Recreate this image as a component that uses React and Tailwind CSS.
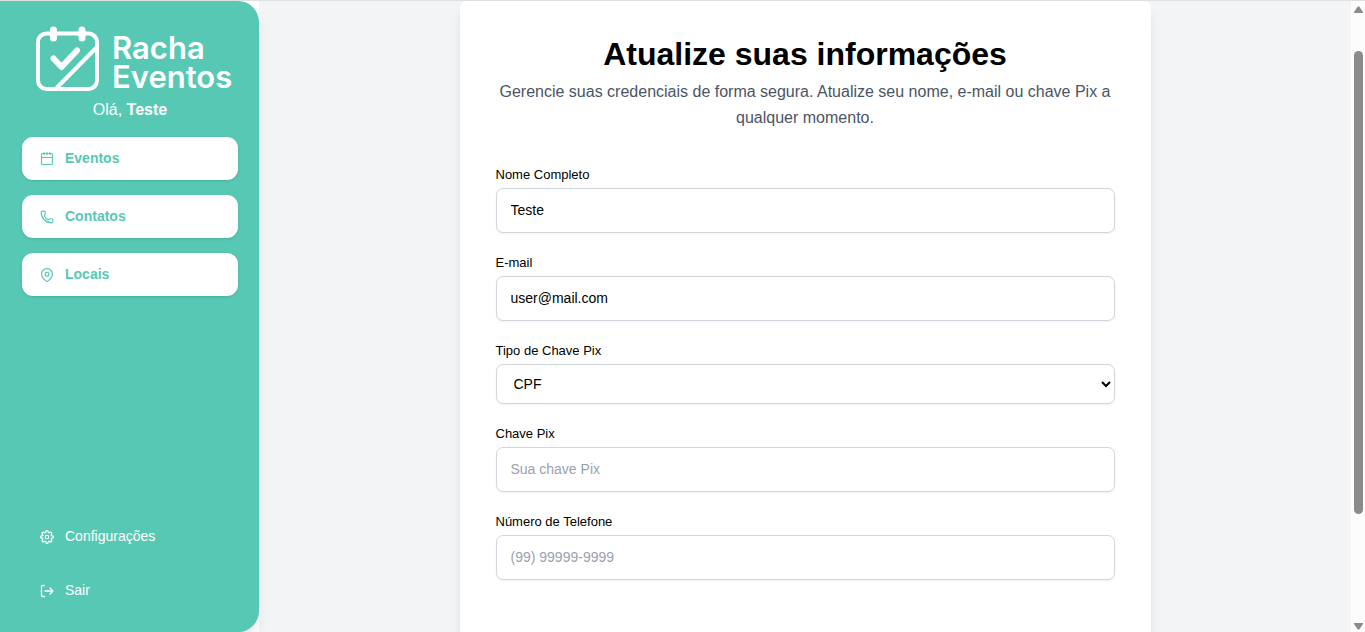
import { Phone } from "lucide-react";

function CalendarIcon() {
  return (
    <svg viewBox="0 0 14 14" className="size-3.5 shrink-0" fill="none" stroke="currentColor" strokeWidth="1.2" strokeLinecap="round" aria-hidden="true">
      <rect x="1.5" y="1.500" width="11" height="11" rx="1" />
      <path d="M1.5 5.500h11M4 0.600v2M7 0.600v2M10 0.600v2" />
    </svg>
  );
}

function PinIcon() {
  return (
    <svg viewBox="0 0 14 14" className="size-3.5 shrink-0" fill="none" stroke="currentColor" strokeWidth="1.2" strokeLinejoin="round" aria-hidden="true">
      <path d="M12.500 6c0 3.200-3.300 6-4.700 7.100a1.250 1.250 0 0 1-1.600 0C4.800 12 1.500 9.200 1.500 6a5.500 5.300 0 0 1 11 0z" />
      <circle cx="7" cy="6.200" r="1.900" />
    </svg>
  );
}

function GearIcon() {
  return (
    <svg viewBox="0 0 24 24" className="size-3.5 shrink-0" fill="none" stroke="currentColor" strokeWidth="2.1" strokeLinecap="round" strokeLinejoin="round" aria-hidden="true">
      <circle cx="12" cy="12" r="3" />
      <path d="M19.4 15a1.65 1.65 0 0 0 .33 1.82l.06.06a2 2 0 1 1-2.83 2.83l-.06-.06a1.65 1.65 0 0 0-2.8 1.17V21a2 2 0 1 1-4 0v-.09a1.65 1.65 0 0 0-2.9-1.26l-.06.06a2 2 0 1 1-2.83-2.83l.06-.06a1.65 1.65 0 0 0-1.17-2.8H3a2 2 0 1 1 0-4h.09a1.65 1.65 0 0 0 1.26-2.9l-.06-.06a2 2 0 1 1 2.83-2.83l.06.06a1.65 1.65 0 0 0 2.8-1.17V3a2 2 0 1 1 4 0v.09a1.65 1.65 0 0 0 2.8 1.17l.06-.06a2 2 0 1 1 2.83 2.83l-.06.06a1.65 1.65 0 0 0 1.17 2.8H21a2 2 0 1 1 0 4h-.09a1.65 1.65 0 0 0-1.51 1z" />
    </svg>
  );
}

function ExitIcon() {
  return (
    <svg viewBox="0 0 14 14" className="size-3.5 shrink-0" fill="none" stroke="currentColor" strokeWidth="1.3" strokeLinecap="round" strokeLinejoin="round" aria-hidden="true">
      <path d="M4.5 1.5H2.5a1 1 0 0 0-1 1v9a1 1 0 0 0 1 1h2M5 7h8M10 4 13 7 10 10" />
    </svg>
  );
}

function Logo() {
  return (
    <div className="flex gap-3 text-white">
      <svg viewBox="0 0 64 66" className="h-[66px] w-16 shrink-0" fill="none" stroke="currentColor" strokeLinecap="round" strokeLinejoin="round" aria-hidden="true">
        <rect x="2" y="7.500" width="59" height="55.500" rx="8.500" strokeWidth="4" />
        <path d="M20.500 62 60 22" strokeWidth="4" strokeLinecap="butt" />
        <path d="M17.500 4v8M46 4v8" strokeWidth="7" />
        <path d="m17.500 32.500 8 8.500L41 24.500" strokeWidth="6" />
      </svg>
      <div className="pt-[7px] font-[Inter,sans-serif] text-[31px] leading-[29px] font-semibold">
        <p>Racha</p>
        <p>Eventos</p>
      </div>
    </div>
  );
}

const navItems = [
  { label: "Eventos", icon: <CalendarIcon /> },
  { label: "Contatos", icon: <Phone size={14} strokeWidth={2} /> },
  { label: "Locais", icon: <PinIcon /> },
];

function Sidebar() {
  return (
    <aside className="relative flex w-[259px] shrink-0 flex-col rounded-r-[21px] bg-[#57c8b4] pt-[25px] pr-[21px] pb-5 pl-[22px] shadow-lg">
      <div className="pl-3.5">
        <Logo />
      </div>
      <p className="mt-1.5 text-center text-base text-white">
        Olá, <strong>Teste</strong>
      </p>
      <nav className="mt-[15px] flex flex-col gap-[15px]">
        {navItems.map((item) => (
          <a key={item.label} href="#" className="flex h-[43px] items-center gap-[11px] rounded-[11px] bg-white px-[18px] text-sm font-bold text-[#57c8b4] shadow-sm">
            {item.icon}
            <span className="pb-0.5">{item.label}</span>
          </a>
        ))}
      </nav>
      <div className="mt-auto flex flex-col gap-[11px] text-sm text-white">
        <a href="#" className="flex h-[43px] items-center gap-[11px] px-[18px]">
          <GearIcon />
          <span className="pb-0.5">Configurações</span>
        </a>
        <button type="button" className="flex h-[43px] items-center gap-[11px] px-[18px]">
          <ExitIcon />
          <span className="pb-0.5">Sair</span>
        </button>
      </div>
    </aside>
  );
}

function Field({ id, label, children }) {
  return (
    <div>
      <label htmlFor={id} className="mb-[3px] block text-[13px] leading-5">
        {label}
      </label>
      {children}
    </div>
  );
}

const inputClass =
  "block h-[45px] w-full rounded-[7px] border border-gray-300 bg-white px-3.5 pb-0.5 text-sm shadow-xs placeholder:text-gray-400";

function ProfileForm() {
  return (
    <form className="flex flex-col gap-5 text-black">
      <Field id="nome" label="Nome Completo">
        <input id="nome" type="text" defaultValue="Teste" className={inputClass} />
      </Field>
      <Field id="email" label="E-mail">
        <input id="email" type="email" defaultValue="user@mail.com" className={inputClass} />
      </Field>
      <Field id="tipo" label="Tipo de Chave Pix">
        <select id="tipo" defaultValue="CPF" className="block h-10 w-full rounded-[7px] border border-gray-300 bg-white px-[13px] text-sm shadow-xs">
          <option>CPF</option>
        </select>
      </Field>
      <Field id="chave" label="Chave Pix">
        <input id="chave" type="text" placeholder="Sua chave Pix" className={inputClass} />
      </Field>
      <Field id="telefone" label="Número de Telefone">
        <input id="telefone" type="tel" placeholder="(99) 99999-9999" className={inputClass} />
      </Field>
    </form>
  );
}

function ScrollRail() {
  return (
    <div className="flex w-3.5 shrink-0 flex-col items-center bg-[#fcfcfc] pt-[5px] pb-0.5 text-[#8b8b8b]" aria-hidden="true">
      <svg viewBox="0 0 9 7" className="h-[7px] w-[9px] shrink-0" fill="currentColor">
        <path d="M3.800.5h1.400L9 6v1H0V6z" />
      </svg>
      <div className="flex w-[9px] grow flex-col pt-[38px]">
        <div className="h-[81%] rounded-full bg-[#8b8b8b]" />
      </div>
      <svg viewBox="0 0 9 7" className="h-[7px] w-[9px] shrink-0" fill="currentColor">
        <path d="M3.800 6.500h1.400L9 1V0H0v1z" />
      </svg>
    </div>
  );
}

export default function App() {
  return (
    <div className="flex h-screen overflow-hidden border-t border-[#dfe0df] bg-white font-['Liberation_Sans',Arial,sans-serif]">
      <Sidebar />
      <main className="flex min-w-0 grow justify-center overflow-hidden bg-gray-100">
        <section className="h-max w-full max-w-[691px] rounded-[7px] bg-white px-9 pt-[33px] pb-24 shadow-lg">
          <header className="mb-[34px] text-center">
            <h1 className="mb-[5px] text-[32px] leading-10 font-bold text-black">Atualize suas informações</h1>
            <p className="text-base leading-[26px] text-gray-600">
              Gerencie suas credenciais de forma segura. Atualize seu nome, e-mail ou chave Pix a qualquer momento.
            </p>
          </header>
          <ProfileForm />
        </section>
      </main>
      <ScrollRail />
    </div>
  );
}
